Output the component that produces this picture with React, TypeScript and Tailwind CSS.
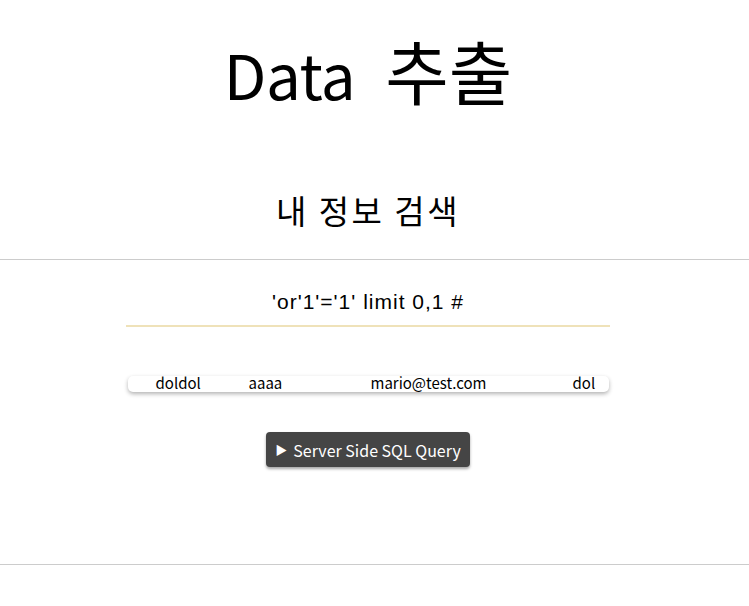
import React from "react";

const kr = { fontFamily: '"Noto Sans CJK KR", "Noto Sans", sans-serif' };

export default function App() {
  return (
    <div className="w-[749px] h-[606px] bg-white text-black overflow-hidden" style={kr}>
      <div className="w-[736px]">
        <div className="h-[140px] flex items-start justify-center pt-[26px]">
          <h1 className="text-[62px] leading-[88px] font-normal flex items-baseline">
            <span className="tracking-[-0.5px]">Data</span>
            <span className="text-[69px] ml-[30px]">추출</span>
          </h1>
        </div>
        <div className="h-[119px] flex items-start justify-center pt-[48px]">
          <h2 className="text-[33px] leading-[44px] font-normal tracking-[2.5px]">내 정보 검색</h2>
        </div>
      </div>
      <div className="h-[1px] bg-[#cccccc]" />
      <div className="w-[736px]">
        <div className="flex justify-center pt-[24px]">
          <div className="w-[484px] border-b-2 border-[#efe2b9] h-[43px] flex items-start justify-center">
            <span className="text-[21px] leading-[36px] tracking-[1px]" style={{ fontFamily: '"Liberation Sans", Arial, sans-serif' }}>
              'or'1'='1' limit 0,1 #
            </span>
          </div>
        </div>
        <div className="flex justify-center pt-[49px]">
          <div className="w-[481px] h-[16px] rounded-[5px] bg-white shadow-[0_2px_4px_rgba(0,0,0,0.3)] relative text-[15px] leading-[16px]">
            <span className="absolute left-[28px] top-[-1px]">doldol</span>
            <span className="absolute left-[121px] top-[-1px]">aaaa</span>
            <span className="absolute left-[243px] top-[-1px]">mario@test.com</span>
            <span className="absolute left-[445px] top-[-1px]">dol</span>
          </div>
        </div>
        <div className="flex justify-center pt-[40px]">
          <button className="w-[204px] h-[35px] rounded-[4px] bg-[#454545] text-white text-[16px] shadow-[0_2px_3px_rgba(0,0,0,0.35)] flex items-center justify-center gap-[6px]">
            <span className="text-[12px]">▶</span>
            <span>Server Side SQL Query</span>
          </button>
        </div>
        <div className="h-[97px]" />
      </div>
      <div className="h-[1px] bg-[#cccccc]" />
    </div>
  );
}
